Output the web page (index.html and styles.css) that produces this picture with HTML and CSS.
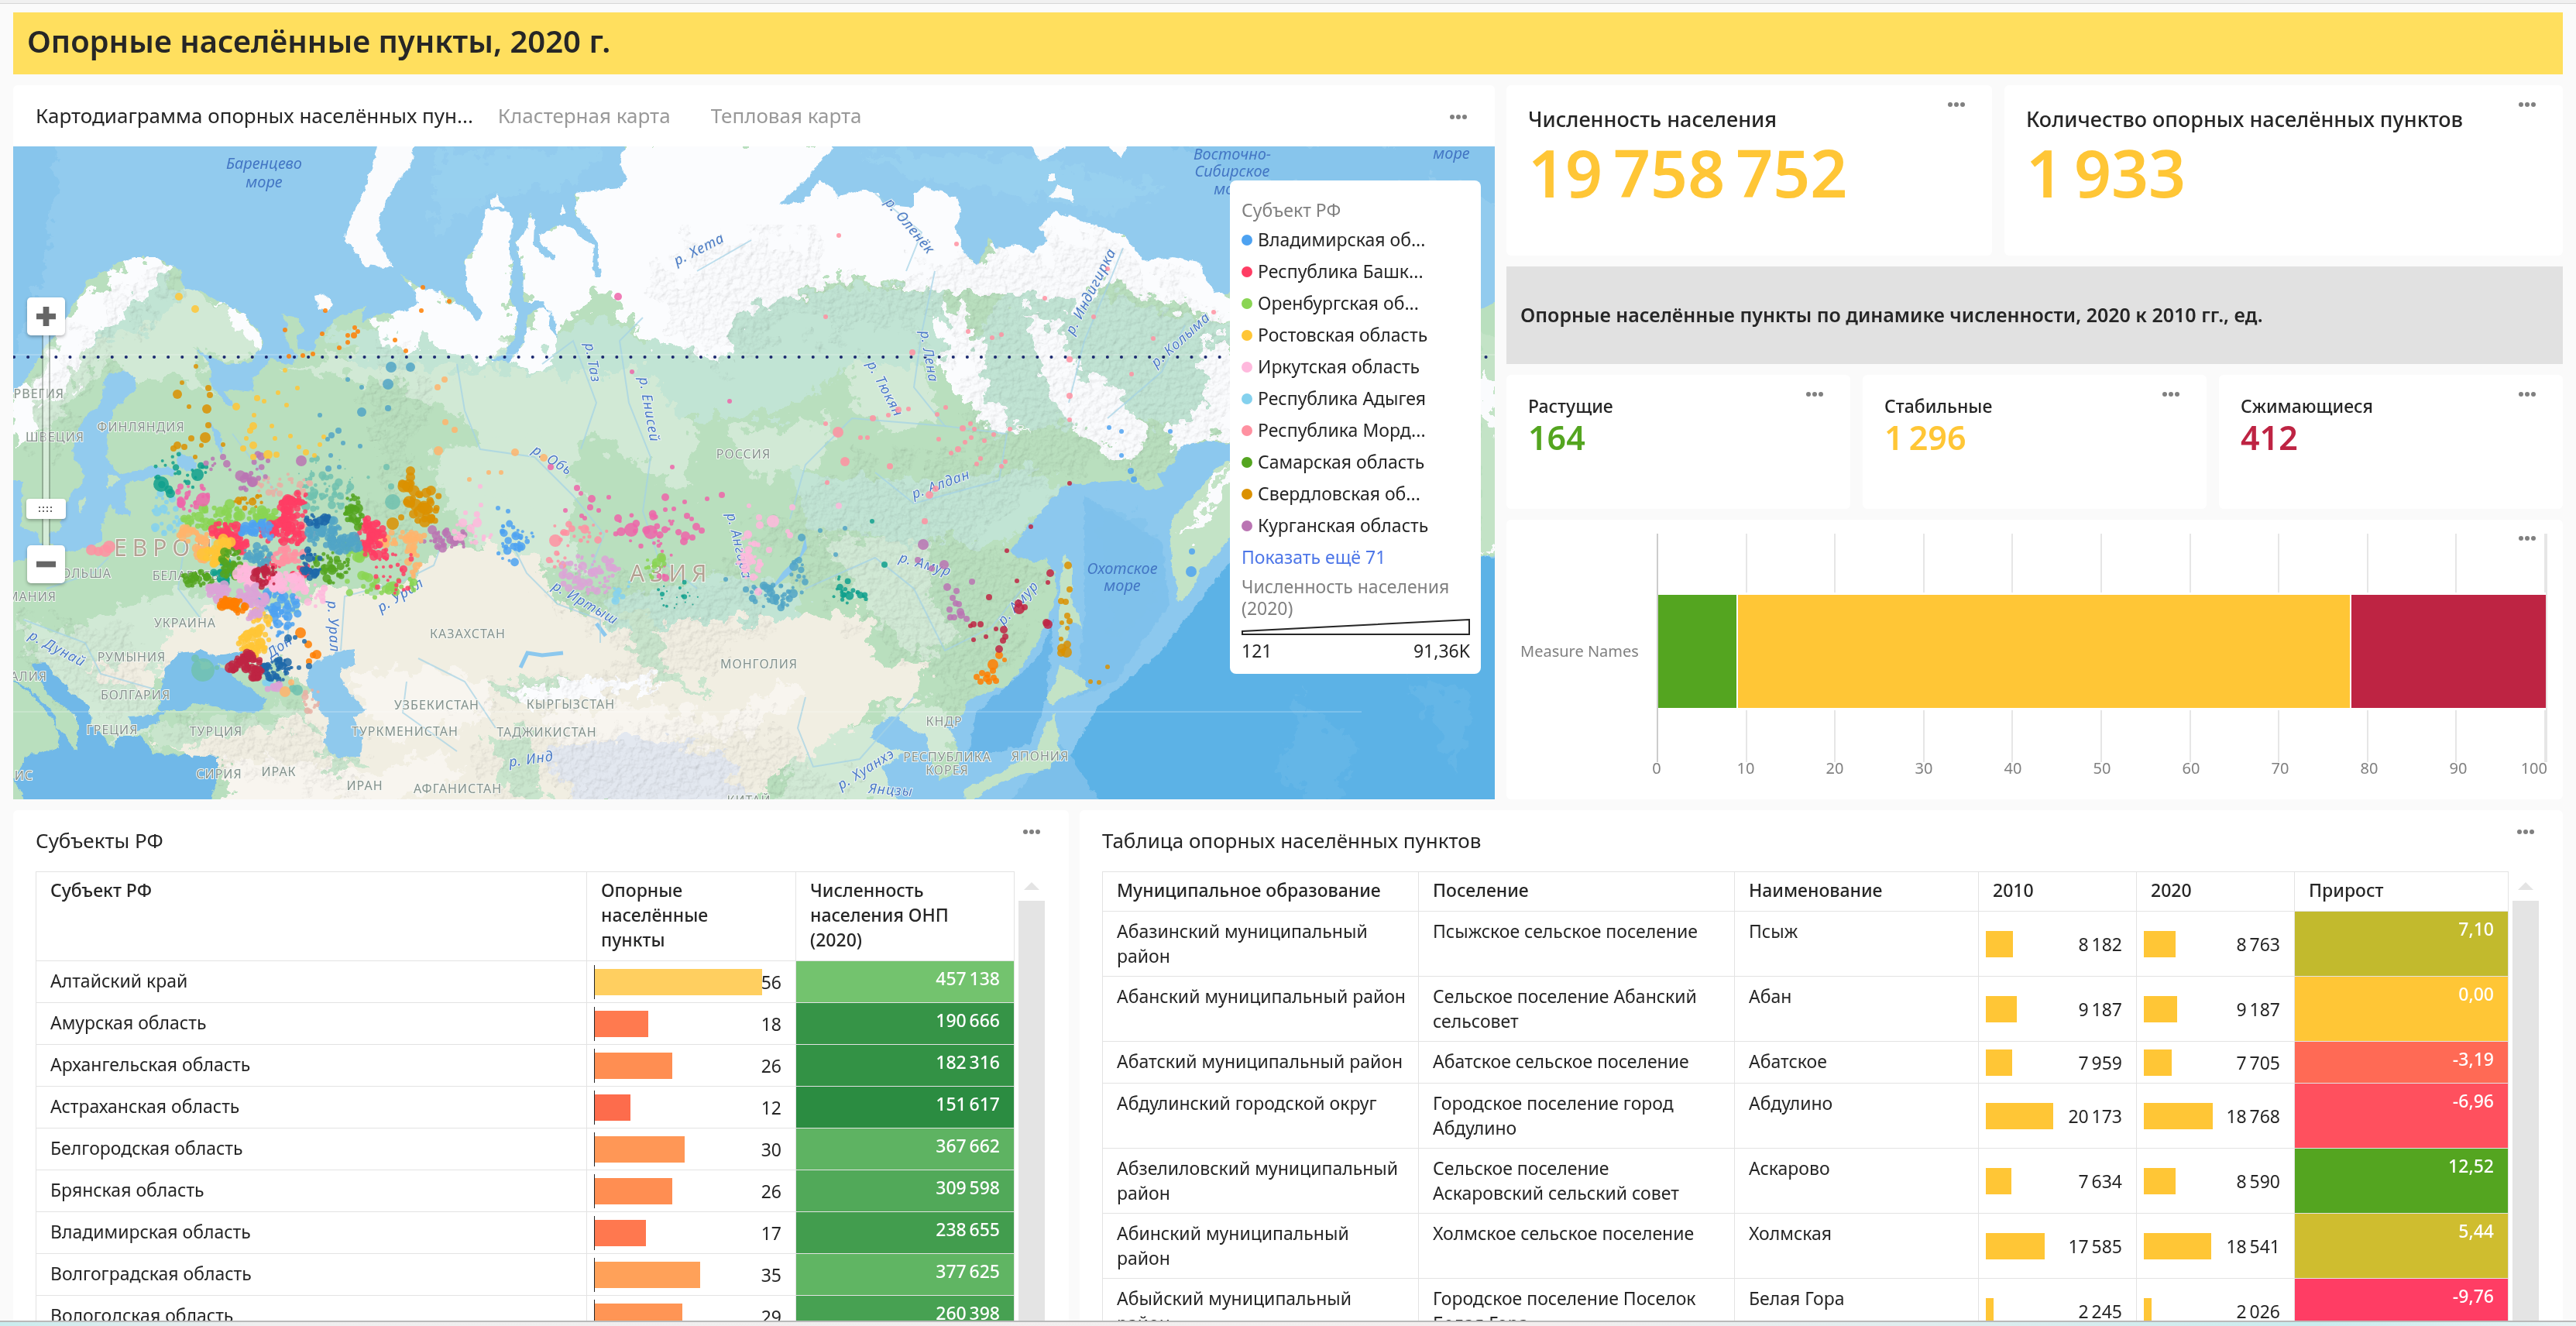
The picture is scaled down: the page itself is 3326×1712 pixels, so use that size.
FILE: index.html
```html
<!DOCTYPE html>
<html lang="ru">
<head>
    <meta charset="UTF-8">
    <meta name="viewport" content="width=device-width, initial-scale=1.0">
    <title>Опорные населённые пункты, 2020 г.</title>
    <link rel="stylesheet" href="styles.css">
</head>
<body>

    <div class="top-line"></div>

    <main class="dashboard">
        <h1 class="page-title">Опорные населённые пункты, 2020 г.</h1>

        <div class="row row-top">
            <!-- Карта -->
            <section class="card map-card">
                <div class="tabs">
                    <button class="tab active" type="button">Картодиаграмма опорных населённых пун...</button>
                    <button class="tab" type="button">Кластерная карта</button>
                    <button class="tab" type="button">Тепловая карта</button>
                    <button class="more" type="button" aria-label="Меню"><svg viewBox="0 0 24 8"><circle cx="4" cy="4" r="3"/><circle cx="12" cy="4" r="3"/><circle cx="20" cy="4" r="3"/></svg></button>
                </div>
                <div class="map">
                    <svg class="map-svg" viewBox="17 189 1913 843" preserveAspectRatio="xMidYMid slice">
                        <defs>
                            <filter id="rough" x="-5%" y="-5%" width="110%" height="110%">
                                <feTurbulence type="fractalNoise" baseFrequency="0.05" numOctaves="4" seed="4"/>
                                <feDisplacementMap in="SourceGraphic" scale="48" xChannelSelector="R" yChannelSelector="G"/>
                            </filter>
                            <filter id="coast" x="-5%" y="-5%" width="110%" height="110%">
                                <feTurbulence type="fractalNoise" baseFrequency="0.09" numOctaves="3" seed="8"/>
                                <feDisplacementMap in="SourceGraphic" scale="9" xChannelSelector="R" yChannelSelector="G"/>
                            </filter>
                            <filter id="relief" x="0" y="0" width="100%" height="100%">
                                <feTurbulence type="fractalNoise" baseFrequency="0.03" numOctaves="4" seed="5" result="w"/>
                                <feDisplacementMap in="SourceGraphic" in2="w" scale="120" xChannelSelector="R" yChannelSelector="G" result="s"/>
                                <feTurbulence type="fractalNoise" baseFrequency="0.12" numOctaves="4" seed="11" result="n"/>
                                <feDiffuseLighting in="n" surfaceScale="4" lighting-color="#ffffff" result="l"><feDistantLight azimuth="225" elevation="60"/></feDiffuseLighting>
                                <feComposite in="l" in2="s" operator="in"/>
                            </filter>
                        </defs>
                        <rect x="17" y="189" width="1913" height="843" fill="#b9dfbe"/>

                        <!-- светлая зелень -->
                        <g fill="#d1e9d5" filter="url(#rough)">
                            <path d="M150 360 250 370 330 430 320 470 250 450 270 510 240 490 170 490 130 460 60 560 20 560 60 450z"/>
                            <path d="M360 470 560 450 740 440 830 470 900 560 890 640 760 560 720 640 640 600 600 540 520 500 420 480z"/>
                            <path d="M560 580 700 560 760 640 720 690 640 700 580 660z"/>
                            <path d="M620 640 720 660 760 740 680 720 610 700z"/>
                            <path d="M1090 460 1180 440 1210 540 1150 560 1100 520z"/>
                            <path d="M940 560 1080 540 1060 600 980 620z"/>
                            <path d="M130 790 250 760 330 790 230 830 190 880 140 850 60 840z"/>
                            <path d="M1060 700 1200 690 1200 780 1240 820 1180 850 1100 760z"/>
                            <path d="M1040 960 1200 900 1240 940 1150 1040 1000 1040z"/>
                            <path d="M20 800 120 820 200 900 180 980 120 940 60 880z"/>
                        </g>
                        <g fill="#c1e4d4" filter="url(#rough)">
                            <path d="M400 430 520 420 640 460 780 410 840 440 960 400 1080 370 1210 370 1260 470 1100 470 1000 540 880 540 830 480 600 480 480 470z"/>
                            <path d="M1260 440 1300 380 1420 380 1590 420 1590 560 1440 540 1280 560z"/>
                            <path d="M780 780 920 740 1040 760 1030 800 880 810 820 860z"/>
                            <path d="M1020 610 1180 620 1330 600 1380 640 1300 700 1180 700 1040 680z"/>
                            <path d="M70 430 170 340 240 370 200 420 110 450z"/>
                        </g>

                        <!-- степи и пустыни -->
                        <g fill="#f1eee2" filter="url(#rough)">
                            <path d="M200 870 225 810 290 785 380 790 410 750 480 765 540 745 560 715 630 705 690 715 720 780 790 800 830 850 860 800 1000 800 1080 790 1130 800 1125 860 1200 850 1190 895 1125 915 1060 970 1000 1000 960 1050 300 1050 290 960 400 920 370 860 300 850z"/>
                            <path d="M190 960 300 930 370 940 420 1000 260 980zM110 860 190 850 200 890 150 890z"/>
                        </g>
                        <g fill="#f8f5ef" filter="url(#rough)">
                            <path d="M450 870 560 860 640 890 620 930 520 960 470 920z"/>
                            <path d="M300 980 480 1000 560 970 600 1000 520 1040 290 1040z"/>
                            <path d="M700 920 840 910 930 930 1010 880 1040 900 960 950 860 960 720 960z"/>
                        </g>
                        <g fill="#c9e5cd" filter="url(#rough)">
                            <path d="M630 890 700 870 780 890 720 905 650 905zM620 950 680 940 700 1030 640 1020 650 980zM800 790 840 790 860 860 920 900 850 880 810 830zM420 960 480 985 420 1000zM345 900 400 915 410 940 350 920zM190 940 320 925 380 935 300 945 210 970z"/>
                        </g>
                        <path d="M700 970 820 950 930 970 980 1050 760 1050z" fill="#e3e8f0" filter="url(#rough)"/>

                        <!-- тундра и горы -->
                        <g fill="#fbfcfe" filter="url(#rough)">
                            <path d="M800 180 1080 180 1240 240 1260 340 1360 260 1560 330 1600 420 1500 390 1420 360 1400 400 1330 380 1230 380 1200 370 1080 360 1010 390 960 400 930 470 840 440 780 380 740 330 740 240z"/>
                            <path d="M600 260 680 250 660 350 665 420 630 470 560 440 510 450 480 420 530 380 540 360 600 400z"/>
                            <path d="M680 280 770 300 775 370 720 430 700 480 660 470 690 400 665 340z"/>
                            <path d="M280 385 320 400 340 450 300 420z"/>
                            <path d="M170 330 230 340 200 370 110 450 90 510 40 520 80 420z"/>
                            <path d="M1215 390 1250 400 1280 520 1330 560 1260 540 1220 480zM1320 400 1370 420 1390 480 1440 500 1480 560 1460 600 1390 560 1350 500zM1550 440 1600 440 1600 570 1570 560 1530 600 1510 560 1560 520z"/>
                            <path d="M650 890 760 875 860 880 780 900 690 910zM17 500 40 500 50 560 20 580z"/>
                        </g>
                        <!-- рельеф -->
                        <g class="relief" filter="url(#relief)">
                            <path d="M860 330 1020 290 1080 370 1230 340 1400 300 1600 420 1600 640 1380 600 1250 700 1360 740 1240 920 1100 780 960 680 1100 600 1260 590 1220 420 1000 420 940 470 860 450z"/>
                            <path d="M50 500 200 340 240 350 120 480 60 600zM490 460 530 460 530 700 490 700zM700 760 960 730 1000 790 880 880 620 920 640 890 820 860zM620 940 1000 930 1100 1032 640 1032zM20 800 180 820 200 900 120 930 40 860zM200 930 430 930 480 1030 300 1000z"/>
                        </g>

                        <!-- моря -->
                        <g fill="#92cbee" filter="url(#coast)">
                            <path d="M0 170V515L17 507 32 493 48 464 70 434 96 393 112 364 147 343 172 332 204 332 233 350 236 368 255 375 281 388 313 404 335 429 338 446 322 468 293 471 274 462 252 450 271 468 274 500 293 523 303 525 290 503 328 507 325 489 351 464 376 471 383 461 367 432 373 421 362 405 386 409 392 428 382 434 386 450 405 453 408 439 434 411 472 396 466 416 485 407 504 403 526 400 539 391 536 379 517 354 542 371 574 379 599 396 617 414 622 404 603 375 601 336 619 311 628 271 657 273 663 282 657 318 662 339 660 386 670 407 663 436 651 461 631 464 657 468 676 443 682 407 702 395 711 405 708 421 721 436 714 410 702 389 676 389 675 343 666 314 682 293 686 273 690 286 689 314 698 327 717 336 717 329 698 314 696 304 721 290 740 295 756 311 767 314 765 343 768 357 775 357 772 314 759 293 743 279 743 248 800 243 810 229 800 207 813 170z"/>
                            <path d="M1075 170V189L1056 214 1043 229 1008 264 1037 261 1059 232 1075 243 1081 257 1103 245 1132 250 1139 264 1180 268 1180 250 1193 241 1234 254 1241 271 1234 296 1244 325 1263 341 1277 304 1288 321 1317 316 1333 327 1352 311 1343 293 1362 273 1400 286 1451 304 1477 337 1515 332 1547 339 1556 357 1569 380 1600 375 1900 400 1950 386 1950 170z"/>
                            <path d="M137 484 164 479 175 488 174 502 150 527 140 549 137 591 154 613 197 602 230 606 224 613 197 616 160 624 160 641 167 666 150 663 140 649 132 677 132 699 114 709 84 713 64 702 64 688 77 684 90 641 110 616 94 584 97 563 110 538 130 520z"/>
                            <path d="M0 620H30L27 680 50 690 60 715 17 725 0 720zM229 584 250 592 255 603 240 610 230 600zM270 545 285 560 288 590 278 570z"/>
                        </g>
                        <g fill="#7dc0ea" filter="url(#coast)">
                            <path d="M230 843 261 840 281 847 319 838 302 853 281 860 312 880 344 903 338 918 306 920 255 907 236 917 207 917 207 893 214 860z"/>
                            <path d="M408 853 440 840 459 838 459 858 440 863 440 875 456 900 472 917 456 927 469 947 466 977 434 977 418 960 424 933 408 907 395 880 399 863z" fill="#8fc9ed"/>
                            <path d="M0 870 38 890 70 920 77 965 32 977 19 1007 38 1050H268L281 1007 281 977 198 973 182 950 153 950 147 967 118 933 115 910 96 897 57 855 41 857 60 895 100 925 100 970 75 940 40 895z" fill="#6fb8e8"/>
                            <path d="M166 925 198 923 215 917 200 935 175 945z"/>
                        </g>
                        <g filter="url(#coast)">
                            <path d="M1600 573 1553 570 1524 577 1515 597 1496 613 1502 627 1483 633 1457 620 1406 623 1375 627 1355 647 1343 663 1324 683 1304 713 1336 727 1349 720 1362 740 1365 767 1355 793 1343 823 1324 853 1304 883 1272 893 1247 907 1244 923 1221 933 1234 957 1241 980 1228 1003 1212 1007 1199 973 1196 947 1170 940 1161 923 1132 937 1123 953 1151 967 1170 970 1139 990 1151 1017 1170 1050H1950V715L1780 720z" fill="#8cc8ee"/>
                            <path d="M1400 640 1500 700 1510 780 1440 880 1390 900 1400 800z" fill="#7fc1ec"/>
                            <path d="M1360 800 1340 850 1260 920 1250 980 1330 960 1350 910z" fill="#6ab6e8"/>
                            <path d="M1620 690 1560 760 1500 840 1420 910 1390 960 1370 1000 1290 1050H1950V720z" fill="#5cb2e6"/>
                            <path d="M1370 960 1430 1050H1290z" fill="#7bbfea"/>
                        </g>
                        <g filter="url(#rough)" fill="#7fc1eb" opacity="0.55">
                            <path d="M0 170H80L60 330 20 460 0 470zM1500 180 1950 180 1950 280 1880 230 1700 260zM1420 650 1480 670 1490 780 1440 830z"/>
                            <path d="M1680 900 1750 960 1720 1050 1650 1000zM1820 880 1900 900 1880 1000z" fill="#6cbbe9"/>
                        </g>
                        <g filter="url(#rough)" fill="#9ad2f0" opacity="0.7">
                            <path d="M560 200 780 190 740 240 640 250 560 300zM1120 200 1300 200 1500 240 1440 280 1300 250 1180 230z"/>
                        </g>
                        <!-- острова -->
                        <g fill="#fafbfd" filter="url(#coast)">
                            <path d="M491 170 541 170 529 214 510 239 491 275 488 311 507 346 472 343 456 321 445 314 446 300 456 275 472 243 481 214z"/>
                            <path d="M408 382 419 379 430 392 424 402 411 400zM634 256 641 250 650 266 634 268zM723 276 728 264 733 276zM1327 180H1388L1360 200 1343 208zM1422 180H1461L1448 204zM1352 254 1366 236 1382 245 1388 261 1370 256zM1353 224h8v10h-8z"/>
                        </g>
                        <g fill="#c3e3c6" filter="url(#coast)">
                            <path d="M1600 590 1572 603 1553 627 1528 653 1515 667 1510 690 1515 740 1521 777 1537 767 1553 733 1579 707 1600 680z"/>
                            <path d="M1375 717 1384 730 1384 773 1397 810 1381 800 1378 830 1368 840 1368 757z"/>
                            <path d="M1368 858 1400 877 1406 890 1375 900 1359 910 1349 900 1362 883z"/>
                            <path d="M1362 917 1365 940 1368 973 1355 993 1317 1000 1279 1017 1247 1040 1244 1020 1292 997 1336 970 1349 940z"/>
                            <path d="M100 645 112 640 105 665zM140 610 154 620 140 630zM255 850 275 858 262 866z"/>
                            <path d="M1912 430 1950 440 1950 710 1912 715z"/>
                        </g>
                        <path d="M1590 600 1572 640 1545 690 1525 700 1550 650 1575 615zM1905 480 1935 500 1935 560 1905 540zM1908 712l22-6v12z" fill="#fafbfd" filter="url(#rough)"/>
                        <path d="M1040 693 1042 708 1021 740 992 765 1011 738 1033 717z" fill="#8cc8ee"/>
                        <path d="M672 862 681 843 700 846 727 843M770 805l12 16" fill="none" stroke="#8cc8ee" stroke-width="5"/>

                        <!-- реки -->
                        <g class="rivers">
                            <path d="M830 410 800 440 812 520 840 590 830 660 850 720 900 760"/>
                            <path d="M590 470 600 530 620 580 690 590 740 640 780 690 760 740"/>
                            <path d="M660 700 680 740 720 780 775 800 775 830"/>
                            <path d="M1207 350 1190 430 1180 500 1220 550 1100 540 1040 600 1020 670"/>
                            <path d="M1220 550 1300 560 1290 620 1180 650 1130 610"/>
                            <path d="M1450 320 1430 370 1400 440 1380 520M1530 420 1500 480 1430 540"/>
                            <path d="M1320 760 1280 810 1220 840 1180 760 1130 720 1040 760"/>
                            <path d="M440 840 445 770 520 750 560 730 575 690"/>
                            <path d="M360 640 330 600 300 560M380 760 370 830 340 840M240 690 230 760 260 800"/>
                            <path d="M30 800 110 830 130 870 200 890M60 760 120 740 140 720"/>
                            <path d="M540 850 600 880 640 940M525 880 520 920 590 970M1040 900 1030 940 1050 990 1110 980 1180 900"/>
                            <path d="M1130 250 1190 300 1170 350M970 310 900 350M700 470 740 440 770 520 750 580"/>
                        </g>
                        <path d="M17 458H1930M17 919H1758" stroke="#fff" stroke-opacity="0.4" stroke-width="1"/>
                        <path d="M18 461H1930" stroke="#1c2a70" stroke-width="4" stroke-linecap="round" stroke-dasharray="0.1 18" fill="none"/>

                        <!-- подписи -->
                        <g class="country">
                            <text class="end" x="83" y="514">РВЕГИЯ</text>
                            <text x="71" y="570">ШВЕЦИЯ</text>
                            <text x="182" y="557">ФИНЛЯНДИЯ</text>
                            <text x="960" y="592">РОССИЯ</text>
                            <text class="end" x="144" y="746">ПОЛЬША</text>
                            <text x="240" y="749">БЕЛАРУСЬ</text>
                            <text class="end" x="73" y="776">МАНИЯ</text>
                            <text x="239" y="810">УКРАИНА</text>
                            <text x="604" y="824">КАЗАХСТАН</text>
                            <text x="170" y="854">РУМЫНИЯ</text>
                            <text x="175" y="903">БОЛГАРИЯ</text>
                            <text class="end" x="61" y="879">АЛИЯ</text>
                            <text x="980" y="863">МОНГОЛИЯ</text>
                            <text x="564" y="916">УЗБЕКИСТАН</text>
                            <text x="737" y="915">КЫРГЫЗСТАН</text>
                            <text x="523" y="950">ТУРКМЕНИСТАН</text>
                            <text x="706" y="951">ТАДЖИКИСТАН</text>
                            <text x="145" y="948">ГРЕЦИЯ</text>
                            <text x="279" y="950">ТУРЦИЯ</text>
                            <text x="283" y="1005">СИРИЯ</text>
                            <text x="360" y="1002">ИРАК</text>
                            <text x="471" y="1020">ИРАН</text>
                            <text x="591" y="1024">АФГАНИСТАН</text>
                            <text x="1219" y="937">КНДР</text>
                            <text x="1223" y="983">РЕСПУБЛИКА</text>
                            <text x="1223" y="1000">КОРЕЯ</text>
                            <text x="1343" y="982">ЯПОНИЯ</text>
                            <text x="967" y="1039">КИТАЙ</text>
                            <text class="end" x="43" y="1007">ИС</text>
                        </g>
                        <g class="continent">
                            <text x="147" y="718">ЕВРОПА</text>
                            <text x="813" y="751">АЗИЯ</text>
                        </g>
                        <g class="sea">
                            <text x="341" y="218">Баренцево</text>
                            <text x="341" y="242">море</text>
                            <text x="1591" y="206">Восточно-</text>
                            <text x="1591" y="228">Сибирское</text>
                            <text x="1591" y="251">море</text>
                            <text x="1874" y="205">море</text>
                            <text x="1449" y="741">Охотское</text>
                            <text x="1449" y="763">море</text>
                        </g>
                        <g class="river">
                            <text transform="translate(874 343) rotate(-27)">р. Хета</text>
                            <text transform="translate(755 444) rotate(80)">р. Таз</text>
                            <text transform="translate(825 488) rotate(80)">р. Енисей</text>
                            <text transform="translate(686 584) rotate(32)">р. Обь</text>
                            <text transform="translate(712 760) rotate(30)">р. Иртыш</text>
                            <text transform="translate(423 776) rotate(87)">р. Урал</text>
                            <text transform="translate(492 791) rotate(-32)">р. Урал</text>
                            <text transform="translate(36 824) rotate(28)">р. Дунай</text>
                            <text transform="translate(938 664) rotate(76)">р. Ангара</text>
                            <text transform="translate(1142 262) rotate(50)">р. Оленёк</text>
                            <text transform="translate(1188 428) rotate(80)">р. Лена</text>
                            <text transform="translate(1119 470) rotate(62)">р. Тюкян</text>
                            <text transform="translate(1386 433) rotate(-63)">р. Индигирка</text>
                            <text transform="translate(1493 475) rotate(-42)">р. Колыма</text>
                            <text transform="translate(1180 644) rotate(-20)">р. Алдан</text>
                            <text transform="translate(1160 725) rotate(16)">р. Амур</text>
                            <text transform="translate(1296 808) rotate(-48)">р. Амур</text>
                            <text transform="translate(1086 1020) rotate(-32)">р. Хуанхэ</text>
                            <text transform="translate(1121 1024) rotate(4)">Янцзы</text>
                            <text transform="translate(658 990) rotate(-8)">р. Инд</text>
                            <text transform="translate(350 850) rotate(-35)">Дон</text>
                        </g>
                        <g id="points"></g>
                    </svg>

                    <div class="zoom">
                        <button class="zoom-btn" type="button" aria-label="Приблизить"><svg viewBox="0 0 26 26"><path d="M9 0h8v9h9v8h-9v9H9v-9H0V9h9z"/></svg></button>
                        <input class="zoom-range" type="range" min="0" max="100" value="14" aria-label="Масштаб">
                        <button class="zoom-btn" type="button" aria-label="Отдалить"><svg viewBox="0 0 26 26"><path d="M0 9h26v8H0z"/></svg></button>
                    </div>

                    <div class="legend">
                        <div class="legend-title">Субъект РФ</div>
                        <ul>
                            <li><i class="c-blue"></i>Владимирская об...</li>
                            <li><i class="c-red"></i>Республика Башк...</li>
                            <li><i class="c-lime"></i>Оренбургская об...</li>
                            <li><i class="c-yellow"></i>Ростовская область</li>
                            <li><i class="c-pink"></i>Иркутская область</li>
                            <li><i class="c-cyan"></i>Республика Адыгея</li>
                            <li><i class="c-salmon"></i>Республика Морд...</li>
                            <li><i class="c-green"></i>Самарская область</li>
                            <li><i class="c-ochre"></i>Свердловская об...</li>
                            <li><i class="c-purple"></i>Курганская область</li>
                        </ul>
                        <a class="legend-more" href="#">Показать ещё 71</a>
                        <div class="legend-size">Численность населения (2020)</div>
                        <svg class="wedge" viewBox="0 0 294 21" preserveAspectRatio="none"><path d="M1 20V16L293 1V20z"/></svg>
                        <div class="legend-scale"><span>121</span><span>91,36K</span></div>
                    </div>
                </div>
            </section>

            <!-- Показатели -->
            <div class="side">
                <div class="kpi-row kpi-large">
                    <section class="card kpi">
                        <button class="more" type="button" aria-label="Меню"><svg viewBox="0 0 24 8"><circle cx="4" cy="4" r="3"/><circle cx="12" cy="4" r="3"/><circle cx="20" cy="4" r="3"/></svg></button>
                        <h2>Численность населения</h2>
                        <p class="c-yellow">19&thinsp;758&thinsp;752</p>
                    </section>
                    <section class="card kpi">
                        <button class="more" type="button" aria-label="Меню"><svg viewBox="0 0 24 8"><circle cx="4" cy="4" r="3"/><circle cx="12" cy="4" r="3"/><circle cx="20" cy="4" r="3"/></svg></button>
                        <h2>Количество опорных населённых пунктов</h2>
                        <p class="c-yellow">1&thinsp;933</p>
                    </section>
                </div>

                <div class="subtitle">Опорные населённые пункты по динамике численности, 2020 к 2010 гг., ед.</div>

                <div class="kpi-row kpi-small">
                    <section class="card kpi">
                        <button class="more" type="button" aria-label="Меню"><svg viewBox="0 0 24 8"><circle cx="4" cy="4" r="3"/><circle cx="12" cy="4" r="3"/><circle cx="20" cy="4" r="3"/></svg></button>
                        <h2>Растущие</h2>
                        <p class="c-green">164</p>
                    </section>
                    <section class="card kpi">
                        <button class="more" type="button" aria-label="Меню"><svg viewBox="0 0 24 8"><circle cx="4" cy="4" r="3"/><circle cx="12" cy="4" r="3"/><circle cx="20" cy="4" r="3"/></svg></button>
                        <h2>Стабильные</h2>
                        <p class="c-yellow">1&thinsp;296</p>
                    </section>
                    <section class="card kpi">
                        <button class="more" type="button" aria-label="Меню"><svg viewBox="0 0 24 8"><circle cx="4" cy="4" r="3"/><circle cx="12" cy="4" r="3"/><circle cx="20" cy="4" r="3"/></svg></button>
                        <h2>Сжимающиеся</h2>
                        <p class="c-crimson">412</p>
                    </section>
                </div>

                <section class="card chart">
                    <button class="more" type="button" aria-label="Меню"><svg viewBox="0 0 24 8"><circle cx="4" cy="4" r="3"/><circle cx="12" cy="4" r="3"/><circle cx="20" cy="4" r="3"/></svg></button>
                    <div class="chart-label">Measure Names</div>
                    <div class="plot">
                        <div class="stack">
                            <div class="c-green" style="width:8.8%"></div>
                            <div class="c-yellow" style="width:69.2%"></div>
                            <div class="c-crimson" style="width:22%"></div>
                        </div>
                    </div>
                    <div class="axis">
                        <span>0</span><span>10</span><span>20</span><span>30</span><span>40</span><span>50</span><span>60</span><span>70</span><span>80</span><span>90</span><span>100</span>
                    </div>
                </section>
            </div>
        </div>

        <div class="row row-bottom">
            <section class="card table-card">
                <div class="card-head">
                    <h2>Субъекты РФ</h2>
                    <button class="more" type="button" aria-label="Меню"><svg viewBox="0 0 24 8"><circle cx="4" cy="4" r="3"/><circle cx="12" cy="4" r="3"/><circle cx="20" cy="4" r="3"/></svg></button>
                </div>
                <div class="table-wrap">
                    <table class="regions">
                        <colgroup><col><col class="w-count"><col class="w-pop"></colgroup>
                        <thead>
                            <tr><th>Субъект РФ</th><th>Опорные населённые пункты</th><th>Численность населения ОНП (2020)</th></tr>
                        </thead>
                        <tbody>
                            <tr><td>Алтайский край</td><td class="bar-cell axis-cell"><div><i style="width:216px;background:#ffcf60"></i><span>56</span></div></td><td class="fill" style="background:#73c36e">457&thinsp;138</td></tr>
                            <tr><td>Амурская область</td><td class="bar-cell axis-cell"><div><i style="width:69px;background:#ff7a4f"></i><span>18</span></div></td><td class="fill" style="background:#369447">190&thinsp;666</td></tr>
                            <tr><td>Архангельская область</td><td class="bar-cell axis-cell"><div><i style="width:100px;background:#ff8e52"></i><span>26</span></div></td><td class="fill" style="background:#339245">182&thinsp;316</td></tr>
                            <tr><td>Астраханская область</td><td class="bar-cell axis-cell"><div><i style="width:46px;background:#fd6c4c"></i><span>12</span></div></td><td class="fill" style="background:#2b8c41">151&thinsp;617</td></tr>
                            <tr><td>Белгородская область</td><td class="bar-cell axis-cell"><div><i style="width:116px;background:#ff9756"></i><span>30</span></div></td><td class="fill" style="background:#5eb362">367&thinsp;662</td></tr>
                            <tr><td>Брянская область</td><td class="bar-cell axis-cell"><div><i style="width:100px;background:#ff8e52"></i><span>26</span></div></td><td class="fill" style="background:#51a959">309&thinsp;598</td></tr>
                            <tr><td>Владимирская область</td><td class="bar-cell axis-cell"><div><i style="width:66px;background:#ff784f"></i><span>17</span></div></td><td class="fill" style="background:#429d4e">238&thinsp;655</td></tr>
                            <tr><td>Волгоградская область</td><td class="bar-cell axis-cell"><div><i style="width:136px;background:#ffa159"></i><span>35</span></div></td><td class="fill" style="background:#60b563">377&thinsp;625</td></tr>
                            <tr><td>Вологодская область</td><td class="bar-cell axis-cell"><div><i style="width:113px;background:#ff9555"></i><span>29</span></div></td><td class="fill" style="background:#47a152">260&thinsp;398</td></tr>
                        </tbody>
                    </table>
                    <div class="scroll"></div>
                </div>
            </section>

            <section class="card table-card">
                <div class="card-head">
                    <h2>Таблица опорных населённых пунктов</h2>
                    <button class="more" type="button" aria-label="Меню"><svg viewBox="0 0 24 8"><circle cx="4" cy="4" r="3"/><circle cx="12" cy="4" r="3"/><circle cx="20" cy="4" r="3"/></svg></button>
                </div>
                <div class="table-wrap">
                    <table class="places">
                        <colgroup><col class="w-name"><col class="w-name"><col class="w-place"><col class="w-year"><col class="w-year"><col></colgroup>
                        <thead>
                            <tr><th>Муниципальное образование</th><th>Поселение</th><th>Наименование</th><th>2010</th><th>2020</th><th>Прирост</th></tr>
                        </thead>
                        <tbody>
                            <tr><td>Абазинский муниципальный<br>район</td><td>Псыжское сельское поселение</td><td>Псыж</td><td class="bar-cell"><div><i style="width:35px"></i><span>8&thinsp;182</span></div></td><td class="bar-cell"><div><i style="width:41px"></i><span>8&thinsp;763</span></div></td><td class="fill" style="background:#c2ba2d">7,10</td></tr>
                            <tr><td>Абанский муниципальный район</td><td>Сельское поселение Абанский сельсовет</td><td>Абан</td><td class="bar-cell"><div><i style="width:40px"></i><span>9&thinsp;187</span></div></td><td class="bar-cell"><div><i style="width:43px"></i><span>9&thinsp;187</span></div></td><td class="fill" style="background:#ffc636">0,00</td></tr>
                            <tr><td>Абатский муниципальный район</td><td>Абатское сельское поселение</td><td>Абатское</td><td class="bar-cell"><div><i style="width:34px"></i><span>7&thinsp;959</span></div></td><td class="bar-cell"><div><i style="width:36px"></i><span>7&thinsp;705</span></div></td><td class="fill" style="background:#ff6a55">-3,19</td></tr>
                            <tr><td>Абдулинский городской округ</td><td>Городское поселение город<br>Абдулино</td><td>Абдулино</td><td class="bar-cell"><div><i style="width:87px"></i><span>20&thinsp;173</span></div></td><td class="bar-cell"><div><i style="width:89px"></i><span>18&thinsp;768</span></div></td><td class="fill" style="background:#ff505e">-6,96</td></tr>
                            <tr><td>Абзелиловский муниципальный район</td><td>Сельское поселение<br>Аскаровский сельский совет</td><td>Аскарово</td><td class="bar-cell"><div><i style="width:33px"></i><span>7&thinsp;634</span></div></td><td class="bar-cell"><div><i style="width:41px"></i><span>8&thinsp;590</span></div></td><td class="fill" style="background:#54a520">12,52</td></tr>
                            <tr><td>Абинский муниципальный<br>район</td><td>Холмское сельское поселение</td><td>Холмская</td><td class="bar-cell"><div><i style="width:76px"></i><span>17&thinsp;585</span></div></td><td class="bar-cell"><div><i style="width:87px"></i><span>18&thinsp;541</span></div></td><td class="fill" style="background:#cfbd2f">5,44</td></tr>
                            <tr><td>Абыйский муниципальный<br>район</td><td>Городское поселение Поселок<br>Белая Гора</td><td>Белая Гора</td><td class="bar-cell"><div><i style="width:10px"></i><span>2&thinsp;245</span></div></td><td class="bar-cell"><div><i style="width:10px"></i><span>2&thinsp;026</span></div></td><td class="fill" style="background:#ff3d64">-9,76</td></tr>
                        </tbody>
                    </table>
                    <div class="scroll"></div>
                </div>
            </section>
        </div>
    </main>

    <div class="bottom-line"></div>

    <script src="map.js"></script>
</body>
</html>
```

FILE: styles.css
```css
* {
    box-sizing: border-box;
}

body {
    margin: 0;
    height: 100vh;
    display: flex;
    flex-direction: column;
    overflow: hidden;
    background-color: #fafafa;
    color: #262626;
    font-family: "Noto Sans", "Open Sans", sans-serif;
    font-size: 23px;
    line-height: 32px;
}

h1, h2, p, ul {
    margin: 0;
    padding: 0;
}

button {
    font: inherit;
    color: inherit;
    background: none;
    border: none;
    padding: 0;
    cursor: pointer;
}

.top-line {
    flex: none;
    height: 5px;
    background-color: #f0f0f0;
    border-bottom: 1px solid #d6d6d6;
}

.bottom-line {
    flex: none;
    height: 7px;
    border-top: 2px solid #b9b9b9;
    background: linear-gradient(to right, #c9ecee, #efefef 10%, #f3eeee 60%, #c9ecee 90%, #e9f3f3);
}

.dashboard {
    flex: 1;
    min-height: 0;
    overflow: hidden;
    padding: 11px 17px 0;
    display: flex;
    flex-direction: column;
    gap: 14px;
}

.page-title {
    flex: none;
    height: 80px;
    padding: 0 18px;
    background-color: #ffdf5e;
    font-size: 40px;
    font-weight: 600;
    line-height: 74px;
}

.row {
    flex: none;
    display: grid;
}

.row-top {
    grid-template-columns: 1913fr 1364fr;
    column-gap: 15px;
}

.row-bottom {
    grid-template-columns: 1363fr 1915fr;
    column-gap: 14px;
}

.card {
    background-color: #fff;
    border-radius: 6px;
    overflow: hidden;
    min-width: 0;
}

.map-card {
    border-radius: 6px 6px 0 0;
}

.more {
    display: block;
    width: 24px;
    height: 8px;
    line-height: 0;
}

.more svg {
    width: 24px;
    height: 8px;
    fill: #808080;
}

/* Цвета регионов */
.c-blue { --c: #4da2f1; }
.c-red { --c: #ff3d64; }
.c-lime { --c: #8ad554; }
.c-yellow { --c: #ffc636; }
.c-pink { --c: #ffb9dd; }
.c-cyan { --c: #84d1ee; }
.c-salmon { --c: #ff91a1; }
.c-green { --c: #54a520; }
.c-ochre { --c: #db9100; }
.c-purple { --c: #ba74b3; }
.c-crimson { --c: #be2443; }

/* Карта */
.tabs {
    display: flex;
    align-items: center;
    gap: 52px;
    height: 79px;
    padding: 0 35px 2px 29px;
    font-size: 26px;
}

.tab {
    color: #999;
    white-space: nowrap;
}

.tab.active {
    color: #262626;
    margin-right: -20px;
}

.tabs .more {
    margin-left: auto;
}

.map {
    position: relative;
    aspect-ratio: 1913 / 843;
    overflow: hidden;
}

.map-svg {
    display: block;
    width: 100%;
    height: 100%;
}

.relief {
    mix-blend-mode: multiply;
    opacity: 0.2;
}

.rivers path {
    fill: none;
    stroke: #a3d2e6;
    stroke-width: 2;
    opacity: 0.7;
}

.country text {
    font-size: 16px;
    letter-spacing: 1px;
    text-anchor: middle;
    fill: #84918c;
    stroke: #f5f8f4;
    stroke-width: 2px;
    paint-order: stroke;
}

.country .end {
    text-anchor: end;
}

.continent text {
    font-size: 30px;
    letter-spacing: 7px;
    fill: #b3a192;
    stroke: #f5f8f4;
    stroke-width: 2px;
    paint-order: stroke;
}

.sea text {
    font-size: 20px;
    font-style: italic;
    text-anchor: middle;
    fill: #4376c4;
}

.river text {
    font-size: 18px;
    font-style: italic;
    letter-spacing: 1px;
    fill: #4b7ac6;
    stroke: #eef4f4;
    stroke-width: 2px;
    paint-order: stroke;
}

.zoom {
    position: absolute;
    top: 195px;
    left: 17px;
    width: 51px;
    display: flex;
    flex-direction: column;
    align-items: center;
}

.zoom-btn {
    width: 49px;
    height: 49px;
    background-color: #fff;
    border-radius: 5px;
    box-shadow: 0 2px 4px rgba(0, 0, 0, 0.3);
    line-height: 0;
}

.zoom-btn svg {
    width: 25px;
    height: 25px;
    fill: #666;
}

.zoom-range {
    appearance: none;
    writing-mode: vertical-lr;
    direction: rtl;
    width: 51px;
    height: 271px;
    margin: 0;
    background: linear-gradient(to right, transparent 20px, rgba(90, 100, 90, 0.4) 20px 22px, rgba(255, 255, 255, 0.4) 22px 29px, rgba(90, 100, 90, 0.4) 29px 31px, transparent 31px);
}

.zoom-range::-webkit-slider-thumb {
    appearance: none;
    width: 51px;
    height: 26px;
    border-radius: 4px;
    background:
        repeating-linear-gradient(to right, transparent 0 2px, #fff 2px 5px) 16px 10px / 20px 7px no-repeat,
        linear-gradient(#666 0 2px, #fff 2px 5px, #666 5px 7px) 16px 10px / 20px 7px no-repeat,
        #fff;
    box-shadow: 0 2px 4px rgba(0, 0, 0, 0.3);
}

.legend {
    position: absolute;
    top: 44px;
    right: 18px;
    width: 324px;
    height: 637px;
    padding: 20px 14px 0 15px;
    background-color: #fff;
    border-radius: 8px;
}

.legend-title {
    line-height: 36px;
    color: #808080;
}

.legend ul {
    list-style: none;
}

.legend li {
    display: flex;
    align-items: center;
    gap: 7px;
    height: 41px;
    line-height: 41px;
    white-space: nowrap;
}

.legend i {
    width: 14px;
    height: 14px;
    border-radius: 50%;
    background-color: var(--c);
}

.legend-more {
    display: block;
    line-height: 40px;
    color: #4d76e8;
    text-decoration: none;
}

.legend-size {
    padding-top: 4px;
    line-height: 28px;
    color: #808080;
}

.wedge {
    display: block;
    width: 100%;
    height: 21px;
}

.wedge path {
    fill: #fff;
    stroke: #262626;
    stroke-width: 2;
}

.legend-scale {
    display: flex;
    justify-content: space-between;
    line-height: 40px;
}

/* Показатели */
.side {
    display: flex;
    flex-direction: column;
    gap: 14px;
    min-width: 0;
}

.kpi-row {
    display: grid;
    column-gap: 16px;
}

.kpi-large {
    grid-template-columns: 627fr 721fr;
    height: 220px;
}

.kpi-small {
    grid-template-columns: 1fr 1fr 1fr;
    height: 173px;
}

.kpi {
    position: relative;
    padding: 27px 28px 0;
    white-space: nowrap;
}

.kpi .more,
.chart .more {
    position: absolute;
    top: 20px;
    right: 34px;
}

.kpi h2 {
    font-size: 27px;
    font-weight: 500;
    line-height: 34px;
}

.kpi p {
    color: var(--c);
    font-size: 84px;
    font-weight: 600;
    line-height: 104px;
}

.kpi-small .kpi {
    padding-top: 24px;
}

.kpi-small h2 {
    font-size: 23px;
    line-height: 32px;
}

.kpi-small p {
    font-size: 43px;
    line-height: 50px;
}

.subtitle {
    height: 126px;
    padding: 0 18px;
    background-color: #e1e1e1;
    font-size: 25px;
    font-weight: 600;
    line-height: 124px;
    white-space: nowrap;
}

/* Диаграмма */
.chart {
    position: relative;
    flex: 1;
    display: grid;
    grid-template-columns: 176px 1fr;
    grid-template-rows: 295px auto;
    padding: 18px 20px 0 18px;
    color: #808080;
    font-size: 20px;
}

.chart-label {
    align-self: center;
    padding-top: 8px;
    white-space: nowrap;
}

.plot {
    padding: 76px 0 0;
    border-left: 2px solid #ccc;
    border-right: 2px solid #e6e6e6;
    background: repeating-linear-gradient(to right, #fff 0 calc(10% - 2px), #e6e6e6 calc(10% - 2px) 10%);
}

.stack {
    display: flex;
    gap: 2px;
    padding: 3px 0;
    background-color: #fff;
}

.stack div {
    height: 146px;
    background-color: var(--c);
}

.axis {
    grid-column: 2;
    display: flex;
    justify-content: space-between;
    line-height: 16px;
}

.axis span {
    width: 40px;
    margin: 0 -20px;
    text-align: center;
}

.axis span:last-child {
    margin-right: 0;
    margin-left: -40px;
    text-align: right;
}

/* Таблицы */
.card-head {
    display: flex;
    justify-content: space-between;
    height: 79px;
    padding: 23px 36px 0 29px;
}

.card-head h2 {
    font-size: 26px;
    font-weight: 400;
    line-height: 32px;
}

.table-wrap {
    display: flex;
    gap: 5px;
    padding: 0 31px 0 29px;
    height: 700px;
}

table {
    flex: 1;
    width: 0;
    table-layout: fixed;
    border-collapse: collapse;
    align-self: flex-start;
}

th, td {
    border: 1px solid #e3e3e3;
    padding: 9px 12px 10px 18px;
    text-align: left;
    vertical-align: top;
}

th {
    padding: 7px 28px 11px 18px;
    font-weight: 500;
}

.w-count { width: 270px; }
.w-pop { width: 282px; }
.w-name { width: 408px; }
.w-place { width: 315px; }
.w-year { width: 204px; }

tbody tr {
    height: 54px;
}

td.bar-cell {
    padding: 0 18px 0 9px;
    vertical-align: middle;
    text-align: right;
}

.bar-cell div {
    position: relative;
    display: flex;
    align-items: center;
    height: 44px;
    white-space: nowrap;
}

.bar-cell i {
    height: 34px;
    background-color: #ffc636;
}

/* число может лежать поверх полосы */
.bar-cell span {
    position: absolute;
    right: 0;
}

.axis-cell div {
    border-left: 1px solid #262626;
}

td.fill {
    padding-top: 6px;
    padding-right: 18px;
    color: #fff;
    text-align: right;
    font-weight: 500;
    white-space: nowrap;
}

.scroll {
    flex: none;
    width: 34px;
    margin-top: 38px;
    background-color: #e4e4e4;
    position: relative;
}

.scroll::before {
    content: "";
    position: absolute;
    top: -24px;
    left: 7px;
    border: 10px solid transparent;
    border-top: none;
    border-bottom-color: #e4e4e4;
}
```

FILE: map.js
```js
const svgNS = 'http://www.w3.org/2000/svg';
const layer = document.getElementById('points');

const colors = {
    blue: '#4da2f1', red: '#ff3d64', lime: '#8ad554', yellow: '#ffc636', pink: '#ffb9dd',
    cyan: '#84d1ee', salmon: '#ff91a1', green: '#54a520', ochre: '#db9100', purple: '#ba74b3',
    navy: '#1f68a9', magenta: '#ed65a9', teal: '#0fa08d', peach: '#ffb46c', crimson: '#be2443',
    orange: '#ff7e00', lilac: '#dca3d7', steel: '#51a4c6', mint: '#70c1af', rose: '#e8b0a4'
};

// Плотные группы: x, y, радиус по x, радиус по y, количество, размер точки
const clusters = {
    teal: [[234, 610, 36, 24, 36, 4], [292, 740, 14, 12, 34, 5], [1090, 765, 27, 20, 34, 4], [875, 770, 26, 18, 28, 3]],
    cyan: [[214, 665, 18, 27, 40, 4], [345, 882, 7, 4, 10, 5], [800, 765, 16, 18, 12, 4]],
    mint: [[422, 635, 32, 24, 80, 4], [430, 612, 46, 20, 22, 3]],
    rose: [[365, 627, 32, 13, 50, 4], [398, 680, 10, 12, 22, 5], [402, 903, 10, 14, 20, 4]],
    magenta: [[252, 640, 26, 18, 40, 4], [835, 685, 36, 20, 40, 4], [860, 730, 12, 20, 12, 4]],
    purple: [[325, 622, 18, 12, 22, 5], [310, 600, 40, 14, 18, 4], [578, 697, 32, 11, 52, 4]],
    ochre: [[322, 650, 18, 14, 24, 4], [550, 655, 20, 20, 40, 6], [528, 633, 8, 22, 16, 6]],
    lime: [[275, 668, 34, 18, 78, 5], [340, 667, 20, 9, 46, 5], [460, 710, 14, 12, 24, 5], [490, 755, 42, 15, 44, 5], [845, 730, 12, 14, 20, 4]],
    peach: [[254, 690, 20, 10, 40, 5], [258, 712, 8, 14, 24, 5], [520, 697, 28, 10, 44, 5], [534, 715, 8, 30, 30, 5]],
    red: [[290, 684, 20, 8, 46, 5], [310, 704, 10, 12, 32, 5], [372, 662, 11, 18, 50, 6], [358, 688, 20, 12, 60, 5], [384, 690, 8, 14, 26, 5], [350, 733, 12, 16, 30, 4], [388, 740, 12, 10, 24, 5], [480, 694, 17, 24, 96, 5], [508, 735, 26, 28, 46, 4], [388, 650, 11, 14, 26, 4]],
    blue: [[322, 684, 12, 8, 30, 5], [346, 684, 14, 12, 28, 4], [358, 783, 26, 18, 60, 5], [362, 808, 14, 12, 22, 4], [664, 700, 22, 24, 56, 4]],
    yellow: [[278, 718, 15, 9, 34, 6], [290, 704, 10, 8, 20, 6], [329, 830, 18, 16, 70, 5], [334, 804, 13, 14, 32, 5]],
    green: [[255, 747, 19, 9, 60, 4], [300, 728, 14, 17, 60, 4], [456, 662, 12, 20, 56, 4], [428, 732, 22, 18, 76, 4]],
    steel: [[332, 718, 17, 12, 60, 4], [418, 688, 20, 18, 76, 5], [445, 702, 19, 12, 60, 5], [1000, 770, 34, 15, 66, 4], [1030, 740, 10, 18, 16, 4]],
    salmon: [[370, 717, 21, 10, 56, 5], [744, 690, 38, 14, 34, 4], [720, 725, 10, 12, 12, 4]],
    navy: [[412, 672, 16, 7, 40, 4], [402, 728, 12, 17, 46, 4], [357, 865, 18, 13, 80, 4]],
    pink: [[320, 742, 14, 12, 46, 5], [372, 752, 30, 11, 56, 5], [402, 770, 20, 14, 24, 4], [610, 680, 28, 18, 34, 4], [968, 720, 14, 28, 46, 4]],
    crimson: [[343, 744, 14, 14, 54, 4], [321, 854, 14, 10, 60, 5], [331, 869, 9, 6, 28, 5], [300, 862, 9, 7, 8, 5]],
    lilac: [[282, 764, 14, 9, 52, 5], [326, 770, 18, 14, 70, 5], [328, 790, 10, 10, 26, 4], [355, 888, 9, 4, 16, 5], [760, 742, 36, 24, 110, 4]],
    orange: [[290, 780, 10, 7, 34, 5], [305, 783, 10, 8, 34, 5]]
};

// Отдельные точки: x, y, размер
const points = {
    salmon: [[118, 710, 7], [127, 712, 6], [136, 711, 8], [141, 706, 8], [717, 698, 8], [1083, 304, 3], [1235, 315, 3], [1430, 347, 3], [1349, 385, 3], [1066, 409, 3], [1412, 409, 3], [1250, 428, 3], [1281, 436, 3], [1293, 432, 3], [1178, 455, 4], [1381, 464, 4], [1489, 437, 3], [1567, 403, 3], [1461, 483, 3], [1381, 511, 4], [1160, 529, 4], [1173, 528, 3], [1147, 536, 3], [1127, 540, 4], [1210, 535, 3], [1221, 526, 3], [1066, 547, 3], [1082, 558, 7], [1111, 565, 3], [1120, 565, 3], [1243, 553, 4], [1253, 547, 3], [1258, 554, 3], [1283, 561, 3], [1304, 554, 3], [1212, 567, 3], [1254, 565, 3], [1246, 571, 3], [1271, 569, 3], [1237, 580, 4], [1228, 585, 3], [1091, 596, 6], [1149, 602, 4], [1266, 592, 3], [1261, 599, 3], [1298, 596, 3], [1293, 602, 3], [1068, 623, 3], [1200, 639, 5], [1208, 631, 4], [1194, 673, 4], [1381, 542, 3]],
    ochre: [[253, 473, 3], [235, 494, 3], [229, 509, 6], [269, 501, 4], [271, 510, 4], [244, 525, 3], [267, 528, 6], [269, 549, 4], [247, 566, 4], [265, 565, 7], [229, 575, 5], [224, 579, 4], [238, 577, 4], [260, 575, 3], [288, 574, 3], [252, 590, 3], [530, 608, 6], [530, 616, 6], [507, 676, 8], [518, 668, 4], [1379, 730, 5], [1381, 761, 4], [1370, 776, 4], [1376, 777, 4], [1378, 795, 4], [1381, 802, 4], [1371, 804, 3], [1378, 811, 3], [1370, 825, 3], [1371, 837, 6], [1378, 832, 5], [1377, 842, 7], [1370, 843, 5], [1430, 861, 3], [1408, 880, 3], [1419, 881, 3]],
    yellow: [[231, 383, 5], [252, 399, 5], [368, 478, 3], [384, 501, 3], [359, 507, 3], [332, 514, 4], [341, 518, 3], [370, 523, 3], [305, 525, 5], [328, 536, 3], [327, 550, 5], [323, 556, 4], [351, 550, 3], [318, 566, 3], [355, 566, 3], [375, 563, 3], [314, 579, 4], [327, 575, 5], [346, 587, 6], [357, 587, 4], [327, 590, 4], [386, 577, 3], [395, 584, 4], [406, 588, 3], [413, 574, 3], [418, 564, 3]],
    orange: [[420, 401, 3], [368, 426, 3], [416, 431, 3], [449, 433, 3], [458, 423, 3], [462, 428, 3], [457, 433, 4], [449, 442, 3], [438, 449, 3], [404, 457, 3], [391, 459, 3], [373, 460, 3], [510, 439, 3], [524, 453, 3], [546, 371, 3], [580, 389, 3], [544, 401, 3], [388, 817, 7], [398, 832, 5], [409, 845, 6], [404, 846, 4], [399, 854, 4], [1290, 846, 5], [1297, 852, 3], [1282, 858, 7], [1282, 866, 4], [1268, 869, 4], [1275, 871, 4], [1261, 874, 4], [1266, 880, 4], [1274, 876, 5], [1283, 875, 4], [1277, 880, 4], [1286, 879, 4]],
    steel: [[505, 474, 7], [530, 474, 6], [501, 496, 7], [449, 490, 3], [467, 500, 3], [467, 532, 6], [501, 527, 4], [413, 536, 3], [437, 556, 4], [428, 562, 4], [423, 567, 3], [443, 572, 3], [465, 576, 3], [427, 588, 3], [424, 605, 4], [438, 603, 3], [937, 748, 3], [963, 761, 4], [1059, 685, 3], [1091, 682, 3], [1035, 694, 5], [1079, 716, 3]],
    mint: [[507, 648, 10], [505, 628, 4], [499, 603, 4], [262, 865, 15], [252, 850, 5], [280, 862, 3], [384, 891, 7], [378, 889, 5]],
    teal: [[255, 613, 8], [208, 625, 10], [220, 637, 6], [1126, 673, 3], [1142, 729, 4]],
    peach: [[565, 500, 4], [574, 490, 4], [587, 555, 4], [575, 545, 4], [566, 582, 6], [665, 584, 5], [702, 591, 5], [631, 610, 3], [647, 610, 3], [606, 619, 3], [368, 893, 7], [376, 881, 4]],
    magenta: [[798, 383, 5], [816, 480, 3], [942, 518, 3], [262, 645, 9], [711, 603, 4], [868, 603, 3], [745, 630, 4], [750, 637, 3], [764, 644, 5], [786, 642, 3], [859, 642, 5], [884, 648, 3], [913, 644, 3], [932, 639, 4], [762, 655, 4], [773, 659, 3], [730, 659, 3], [751, 666, 3], [755, 669, 3], [798, 669, 5], [859, 658, 3], [870, 657, 3], [887, 666, 4], [893, 670, 3], [899, 680, 5], [906, 685, 4], [885, 692, 6], [883, 699, 5], [894, 694, 4], [815, 684, 9], [840, 687, 9]],
    purple: [[326, 622, 7], [389, 595, 7], [346, 595, 3], [288, 590, 4], [558, 684, 6], [1192, 703, 7], [1185, 723, 4], [1203, 734, 4], [1219, 729, 6], [1223, 758, 5], [1235, 763, 4], [1255, 751, 4], [1230, 772, 4], [1234, 779, 4], [1238, 780, 4], [1226, 787, 4], [1240, 790, 5], [1227, 797, 4], [1232, 797, 4], [1241, 794, 5], [1248, 799, 4]],
    pink: [[620, 628, 3], [621, 652, 3], [601, 662, 3], [967, 653, 3], [1023, 655, 4], [1083, 653, 4], [998, 673, 8], [981, 678, 5], [980, 668, 4], [1017, 686, 3], [1020, 691, 4], [993, 710, 4], [965, 722, 9], [979, 764, 5]],
    blue: [[643, 656, 3], [656, 660, 3], [1432, 552, 3], [1448, 557, 3], [1511, 557, 3], [1448, 588, 3], [1460, 608, 4], [1464, 619, 4], [1539, 712, 4], [1538, 738, 7]],
    navy: [[372, 824, 5], [381, 823, 3], [393, 828, 3], [399, 860, 4], [386, 862, 3]],
    crimson: [[297, 862, 7], [1381, 624, 3], [1331, 680, 3], [1300, 711, 3], [1356, 740, 5], [1353, 752, 3], [1313, 750, 3], [1277, 771, 4], [1315, 779, 5], [1316, 786, 7], [1323, 784, 4], [1351, 804, 5], [1353, 806, 6], [1257, 806, 4], [1266, 806, 4], [1253, 808, 3], [1286, 812, 3], [1296, 813, 5], [1273, 822, 3], [1257, 826, 3], [1298, 822, 4], [1295, 827, 4], [1290, 838, 5]]
};

// Псевдослучайные числа с постоянным зерном, чтобы карта не менялась
let seed = 20;
function random() {
    seed = (seed * 16807) % 2147483647;
    return seed / 2147483647;
}

function addPoint(x, y, r, color) {
    const circle = document.createElementNS(svgNS, 'circle');
    circle.setAttribute('cx', x);
    circle.setAttribute('cy', y);
    circle.setAttribute('r', r);
    circle.setAttribute('fill', color);
    circle.setAttribute('fill-opacity', 0.85);
    layer.appendChild(circle);
}

Object.keys(clusters).forEach(name => {
    clusters[name].forEach(([x, y, rx, ry, count, size]) => {
        for (let i = 0; i < count * 0.65; i++) {
            const angle = random() * Math.PI * 2;
            const dist = Math.pow(random(), 0.6) * 1.15;
            const r = size - 2 + Math.pow(random(), 3) * 4;
            addPoint(x + Math.cos(angle) * rx * dist, y + Math.sin(angle) * ry * dist, r, colors[name]);
        }
    });
});

Object.keys(points).forEach(name => {
    points[name].forEach(([x, y, r]) => addPoint(x, y, r, colors[name]));
});
```
